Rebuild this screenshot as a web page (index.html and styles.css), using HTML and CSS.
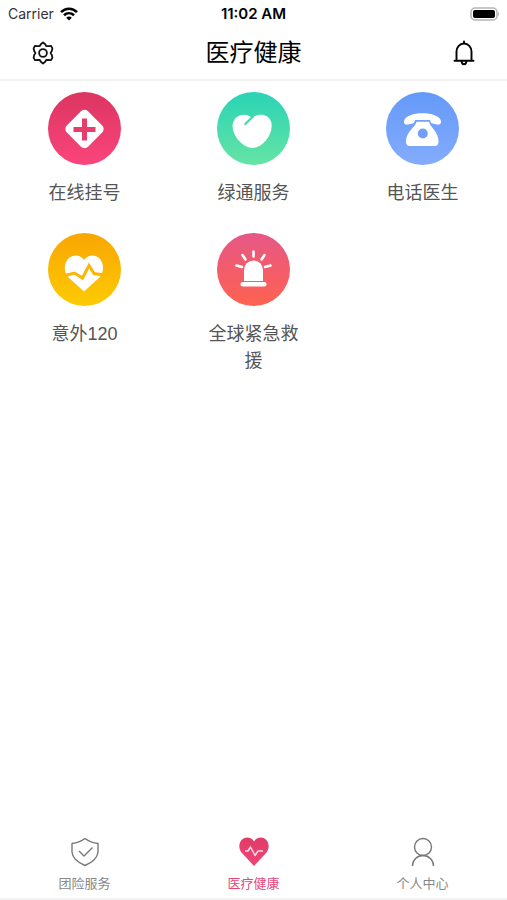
FILE: index.html
```html
<!DOCTYPE html>
<html lang="zh-CN">
<head>
    <meta charset="UTF-8">
    <meta name="viewport" content="width=device-width, initial-scale=1.0">
    <title>医疗健康</title>
    <link rel="stylesheet" href="styles.css">
</head>
<body>
    <div class="status-bar">
        <div class="carrier">
            <span>Carrier</span>
            <svg width="18" height="14" viewBox="0 0 18 14" fill="none" stroke="#000" stroke-width="2.6">
                <path d="M1 5.2C5.600 .6 12.400 .6 17 5.200"/>
                <path d="M4 8.300c2.900-2.800 7.100-2.800 10 0"/>
                <path d="M9 13.600 6.200 10.700c1.600-1.500 4-1.500 5.600 0z" fill="#000" stroke="none"/>
            </svg>
        </div>
        <div class="time">11:02 AM</div>
        <div class="battery">
            <svg width="30" height="14" viewBox="0 0 30 14">
                <rect x="2" y="1" width="26" height="12" rx="4" fill="#fff" stroke="#b5b5b5" stroke-width="1.500"/>
                <rect x="4" y="3" width="22" height="8" rx="2" fill="#000"/>
                <path d="M29 5v4c1.300-.5 1.300-3.500 0-4z" fill="#b5b5b5"/>
            </svg>
        </div>
    </div>

    <header class="header">
        <button class="icon-btn" type="button" aria-label="设置">
            <svg width="24" height="24" viewBox="0 0 24 24" fill="none" stroke="#151515" stroke-width="1.800" stroke-linejoin="round">
                <path d="M9.800 3.300 12 1.500l2.200 1.800 1 1.700 2 .1 2.900-.3 1.300 2.500-.6 2.700-1.200 2 1.200 2 .6 2.700-1.300 2.500-2.900-.3-2 .1-1 1.700-2.200 1.800-2.200-1.800-1-1.700-2-.1-2.900.3-1.300-2.500.6-2.700 1.200-2-1.200-2-.6-2.700 1.300-2.500 2.900.3 2-.1z"/>
                <circle cx="12" cy="12" r="3.900"/>
            </svg>
        </button>
        <h1>医疗健康</h1>
        <button class="icon-btn" type="button" aria-label="消息">
            <svg width="24" height="26" viewBox="0 0 24 26" fill="none" stroke="#000" stroke-width="1.900" stroke-linecap="round">
                <path d="M12 1.500v2M4.500 20.500v-9a7.500 8 0 0 1 15 0v9M2.500 20.800h19"/>
                <path d="M9.700 21.500a2.300 2.700 0 0 0 4.600 0"/>
            </svg>
        </button>
    </header>

    <main class="services">
        <a class="service" href="#">
            <svg viewBox="0 0 73 73">
                <defs>
                    <linearGradient id="red" x1="0" y1="0" x2="0" y2="1">
                        <stop offset="0" stop-color="#dc3561"/>
                        <stop offset="1" stop-color="#fa457c"/>
                    </linearGradient>
                </defs>
                <circle cx="36.500" cy="36.500" r="36.500" fill="url(#red)"/>
                <rect x="21.500" y="22" width="30" height="30" rx="5" fill="#fff" transform="rotate(45 36.500 37)"/>
                <path d="M36.500 26.500v22M25.500 37.500h22" stroke="#e73d6c" stroke-width="5"/>
            </svg>
            <span>在线挂号</span>
        </a>
        <a class="service" href="#">
            <svg viewBox="0 0 73 73">
                <defs>
                    <linearGradient id="green" x1="0" y1="0" x2="0" y2="1">
                        <stop offset="0" stop-color="#2ad3b5"/>
                        <stop offset="1" stop-color="#65e4a4"/>
                    </linearGradient>
                </defs>
                <circle cx="36.500" cy="36.500" r="36.500" fill="url(#green)"/>
                <path d="M35 26C30 20.500 18 21.500 15.800 31.500 14 43.500 26 55.500 35.500 56 45 55.500 56 44 54.500 31 52.500 21.500 41.500 20.500 35 26z" fill="#fff"/>
                <path d="M36 24.500 28.300 32" stroke="#40d9ae" stroke-width="2.200" stroke-linecap="round"/>
            </svg>
            <span>绿通服务</span>
        </a>
        <a class="service" href="#">
            <svg viewBox="0 0 73 73">
                <defs>
                    <linearGradient id="blue" x1="0" y1="0" x2="0" y2="1">
                        <stop offset="0" stop-color="#6599f8"/>
                        <stop offset="1" stop-color="#83acfd"/>
                    </linearGradient>
                </defs>
                <circle cx="36.500" cy="36.500" r="36.500" fill="url(#blue)"/>
                <path d="M18 29C20.500 18.800 52.500 18.800 55 29 55.500 32 53.500 33 51 32.500L46.500 31.500C44.500 31 44.500 29.500 44 28H29c-.5 1.500-.5 3-2.500 3.500l-4.500 1c-2.500.5-4.500-.5-4-3.500z" fill="#fff"/>
                <path d="M30.500 29.800h12.500c1 5.500 9.500 10.200 9.500 19.200 0 4-1.500 5-4 5h-24.500c-2.500 0-4-1-4-5 0-9 9.500-13.700 10.500-19.200z" fill="#fff"/>
                <circle cx="36.800" cy="41.500" r="5" fill="#729ffa"/>
            </svg>
            <span>电话医生</span>
        </a>
        <a class="service" href="#">
            <svg viewBox="0 0 73 73">
                <defs>
                    <linearGradient id="yellow" x1="0" y1="0" x2="0" y2="1">
                        <stop offset="0" stop-color="#f9a602"/>
                        <stop offset="1" stop-color="#fdca03"/>
                    </linearGradient>
                </defs>
                <circle cx="36.500" cy="36.500" r="36.500" fill="url(#yellow)"/>
                <path d="M36 58.500 20.500 44.500C12.500 34.500 19 22.500 27.500 22.500c4 0 6.500 1.500 8.500 4.500 2-3 5-4.500 8.500-4.500C53 22.500 59.500 34.500 51.500 44.500z" fill="#fff"/>
                <path d="m17 42.500 9.500-2.500 8 5L41 32.500 46 40.500 56 42" fill="none" stroke="#fab603" stroke-width="3"/>
            </svg>
            <span>意外120</span>
        </a>
        <a class="service" href="#">
            <svg viewBox="0 0 73 73">
                <defs>
                    <linearGradient id="alarm" x1="0" y1="0" x2="0" y2="1">
                        <stop offset="0" stop-color="#e65787"/>
                        <stop offset="1" stop-color="#ff6250"/>
                    </linearGradient>
                </defs>
                <circle cx="36.500" cy="36.500" r="36.500" fill="url(#alarm)"/>
                <path d="M27 48V37a9.500 9.500 0 0 1 19 0v11z" fill="#fff"/>
                <rect x="23.500" y="49" width="26" height="4.500" rx="2.200" fill="#fff"/>
                <path d="M36.500 18.500v5M25.500 22l3 4.500M47.500 22l-3 4.500M19.500 32.500l5.500 1.500M53.500 32.500 48 34" stroke="#fff" stroke-width="2.600" stroke-linecap="round"/>
            </svg>
            <span>全球紧急救援</span>
        </a>
    </main>

    <nav class="tab-bar">
        <a class="tab" href="#">
            <svg width="30" height="30" viewBox="0 0 30 30" fill="none" stroke="#777" stroke-width="1.400" stroke-linejoin="round">
                <path d="M15 1.500C11 4.500 7 6 2 6.500v8.500C2.500 21 8 25.500 15 28.500 22 25.500 27.500 21 28 15V6.500C23 6 19 4.500 15 1.500z"/>
                <path d="m9 14 5 5 8.500-8.500"/>
            </svg>
            <span>团险服务</span>
        </a>
        <a class="tab active" href="#">
            <svg width="30" height="30" viewBox="0 0 30 30">
                <defs>
                    <linearGradient id="heart" x1="0" y1="0" x2="0" y2="1">
                        <stop offset="0" stop-color="#e03c67"/>
                        <stop offset="1" stop-color="#f04478"/>
                    </linearGradient>
                </defs>
                <path d="M15 29 2.500 15.500C-2.500 8.500 2 .5 8 .5c3 0 5.500 1.500 7 4 1.500-2.500 4-4 7-4 6 0 10.500 8 5.500 15z" fill="url(#heart)"/>
                <path d="M6 14h3l2.500-4 4.500 8.500 3-4.500h5" fill="none" stroke="#ffdbe5" stroke-width="1.500" stroke-linejoin="round"/>
            </svg>
            <span>医疗健康</span>
        </a>
        <a class="tab" href="#">
            <svg width="30" height="30" viewBox="0 0 30 30" fill="none" stroke="#777" stroke-width="1.400">
                <circle cx="15" cy="10" r="8.500"/>
                <path d="M4.500 29a10.500 10.500 0 0 1 21 0"/>
            </svg>
            <span>个人中心</span>
        </a>
    </nav>
</body>
</html>
```

FILE: styles.css
```css
* {
    box-sizing: border-box;
}
body {
    margin: 0;
    min-height: 100vh;
    display: flex;
    flex-direction: column;
    background-color: #fff;
    font-family: Inter, "Noto Sans CJK SC", sans-serif;
    color: #000;
}
svg {
    display: block;
}
a {
    color: inherit;
    text-decoration: none;
}
.status-bar {
    display: grid;
    grid-template-columns: 1fr auto 1fr;
    align-items: center;
    height: 27px;
    padding: 0 8px;
    font-size: 14px;
}
.carrier {
    display: flex;
    align-items: center;
    gap: 6px;
    color: #333;
}
.time {
    font-size: 15px;
    font-weight: 600;
    line-height: 18px;
}
.battery {
    justify-self: end;
}
.header {
    display: flex;
    align-items: center;
    justify-content: space-between;
    height: 54px;
    padding: 0 31px;
    border-bottom: 2px solid #f1f1f1;
}
.header h1 {
    margin: 0;
    font-size: 24px;
    font-weight: 400;
    line-height: 36px;
}
.icon-btn {
    padding: 0;
    border: none;
    background: none;
    cursor: pointer;
}
.services {
    flex: 1;
    display: grid;
    grid-template-columns: repeat(3, 1fr);
    align-content: start;
    row-gap: 26px;
    padding-top: 11px;
}
.service {
    display: flex;
    flex-direction: column;
    align-items: center;
    gap: 15px;
    font-family: "Liberation Sans", "Noto Sans CJK SC", sans-serif;
    font-size: 18px;
    line-height: 27px;
    color: #555;
}
.service svg {
    width: 73px;
    height: 73px;
}
.service span {
    max-width: 100px;
    text-align: center;
}
.tab-bar {
    display: grid;
    grid-template-columns: repeat(3, 1fr);
    padding-bottom: 5px;
    border-bottom: 2px solid #f3f3f3;
}
.tab {
    display: flex;
    flex-direction: column;
    align-items: center;
    gap: 6px;
    font-size: 13px;
    line-height: 20px;
    color: #888;
}
.tab.active {
    color: #e6477a;
}
```
